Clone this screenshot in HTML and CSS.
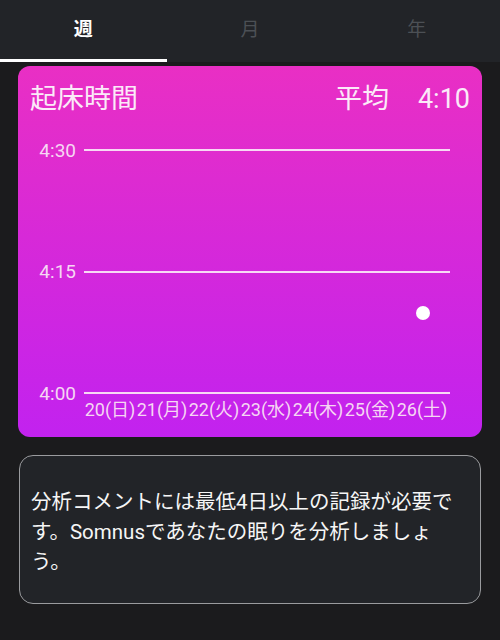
FILE: index.html
```html
<!DOCTYPE html>
<html lang="ja">
<head>
  <meta charset="UTF-8" />
  <meta name="viewport" content="width=device-width, initial-scale=1.0" />
  <title>起床時間</title>
  <link rel="stylesheet" href="styles.css">
</head>
<body>
  <div class="tabs">
    <div class="tab active">週</div>
    <div class="tab">月</div>
    <div class="tab">年</div>
  </div>

  <div class="card">
    <div class="card-head">
      <span class="title">起床時間</span>
      <span class="avg">平均<span class="avg-value">4:10</span></span>
    </div>

    <div class="chart">
      <div class="row"><span class="label">4:30</span><span class="line"></span></div>
      <div class="row"><span class="label">4:15</span><span class="line"></span></div>
      <div class="row"><span class="label">4:00</span><span class="line"></span></div>
      <!-- 26(土) 4:10 -->
      <span class="dot" style="left: 386px; top: 166px;"></span>
    </div>

    <div class="days">
      <span>20(日)</span>
      <span>21(月)</span>
      <span>22(火)</span>
      <span>23(水)</span>
      <span>24(木)</span>
      <span>25(金)</span>
      <span>26(土)</span>
    </div>
  </div>

  <div class="comment">
    分析コメントには最低4日以上の記録が必要です。Somnusであなたの眠りを分析しましょう。
  </div>
</body>
</html>
```

FILE: styles.css
```css
body { margin: 0; background: #1b1b1d; font-family: Roboto, "Noto Sans CJK JP", sans-serif; color: #fff; width: 500px; height: 640px; overflow: hidden; }

.tabs { display: flex; background: #222428; height: 62px; }
.tab { flex: 1; text-align: center; font-size: 19px; line-height: 59px; color: #4c5055; border-bottom: 3px solid transparent; }
.tab.active { color: #fff; font-weight: bold; border-bottom-color: #fff; }

.card { margin: 4px 18px 0; height: 371px; box-sizing: border-box; padding: 14px 12px 0; border-radius: 12px; background: linear-gradient(#e92fc4, #c222ef); }
.card-head { display: flex; justify-content: space-between; line-height: 38px; font-size: 27px; color: #fbeaf8; }
.avg-value { margin-left: 29px; }

.chart { position: relative; height: 263px; margin-top: 22px; display: flex; flex-direction: column; justify-content: space-between; }
.row { display: flex; align-items: center; height: 20px; }
.label { width: 46px; text-align: right; font-size: 19px; color: #f6d6f3; }
.line { flex: 1; height: 2px; margin: 0 20px 0 8px; background: #f8d8f4; }
.dot { position: absolute; width: 14px; height: 14px; border-radius: 50%; background: #fff; }

.days { display: grid; grid-template-columns: repeat(7, 52px); margin: -3px 0 0 54px; font-size: 18px; line-height: 20px; color: #f6d6f3; text-align: center; }

.comment { margin: 18px 19px 0; box-sizing: border-box; height: 149px; padding: 31px 14px 0 11px; border: 1.5px solid #9a9b9e; border-radius: 14px; background: #222428; font-size: 20.5px; line-height: 30px; color: #f6f6f6; }
```
